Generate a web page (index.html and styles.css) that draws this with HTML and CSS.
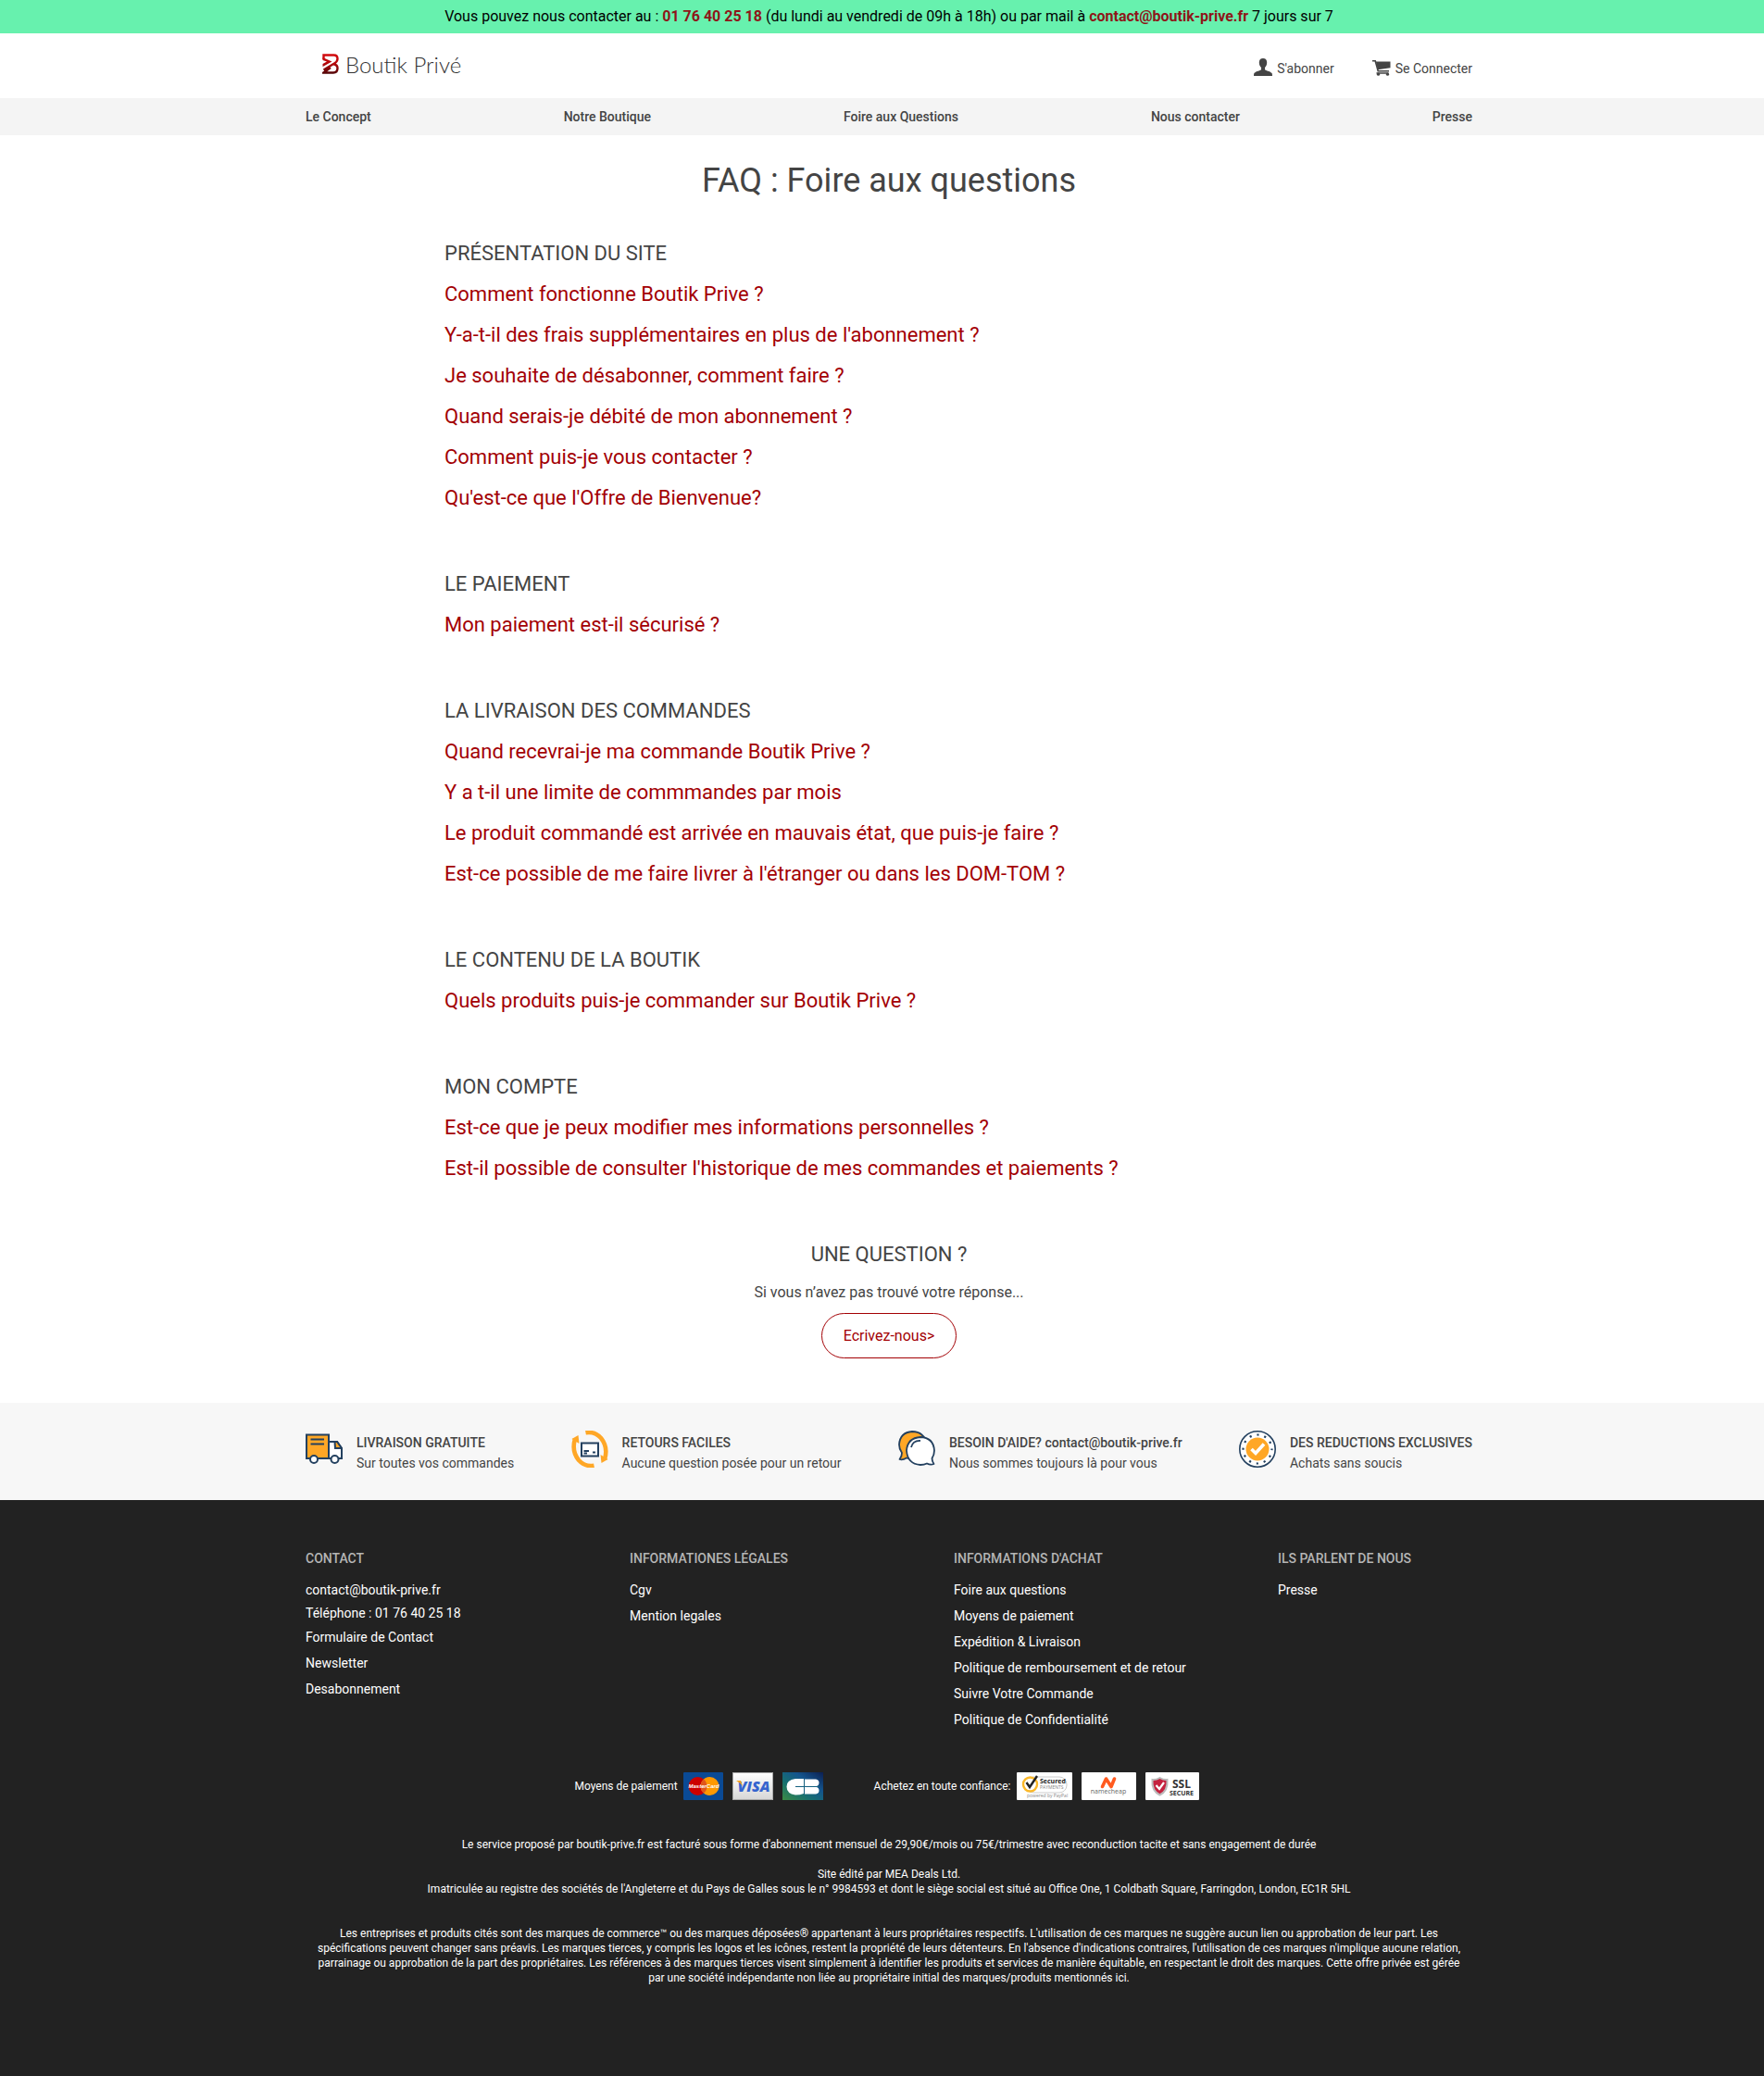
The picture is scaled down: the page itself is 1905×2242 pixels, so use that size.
FILE: index.html
```html
<!DOCTYPE html>
<html lang="fr">
<head>
<meta charset="utf-8">
<title>Boutik Privé - FAQ</title>
<meta name="viewport" content="width=device-width, initial-scale=1">
<link rel="stylesheet" href="styles.css">
</head>
<body>
<div class="topbar band">
  <p>Vous pouvez nous contacter au : <strong>01 76 40 25 18</strong> (du lundi au vendredi de 09h à 18h) ou par mail à <a href="mailto:contact@boutik-prive.fr">contact@boutik-prive.fr</a> 7 jours sur 7</p>
</div>

<header class="header band">
  <div class="container header-row">
    <a class="logo" href="#">
      <svg width="18" height="22" viewBox="0 0 18 22" aria-hidden="true">
        <defs><linearGradient id="lg" gradientUnits="userSpaceOnUse" x1="0" y1="0" x2="0" y2="22"><stop offset="0" stop-color="#d60a0e"/><stop offset=".5" stop-color="#b3080b"/><stop offset="1" stop-color="#4d0507"/></linearGradient></defs>
        <path d="M1.500 6V1.500H12.500Q16.500 1.500 16.500 5.500Q16.500 8.500 13 10.500L1.500 17.500M12.500 11.500Q16.500 12 16.500 15.500Q16.500 20.500 12 20.500H1.500L9 15" fill="none" stroke="url(#lg)" stroke-width="2.400"/>
        <path d="M.5 4L10.500 8.500L.5 14V11L5 8.600L.5 7Z" fill="url(#lg)"/>
      </svg>
      <span>Boutik Privé</span>
    </a>
    <div class="account">
      <a href="#">
        <svg width="20" height="19" viewBox="0 0 20 19" aria-hidden="true"><path d="M10 0C7.500 0 5.800 1.600 5.800 4.200C5.800 6.500 6.500 8.500 8 10V12.200C6 13.500 1 14.500 .3 16.300Q0 17.500 0 19H20Q20 17.500 19.700 16.300C19 14.500 14 13.500 12 12.200V10C13.500 8.500 14.200 6.500 14.200 4.200C14.200 1.600 12.500 0 10 0Z" fill="currentColor"/></svg>
        S'abonner
      </a>
      <a href="#">
        <svg width="20" height="17" viewBox="0 0 20 17" aria-hidden="true"><path d="M0 .8H3.200L6.200 11.800H18M4.500 14H17.500" fill="none" stroke="currentColor" stroke-width="1.600"/><path d="M3.800 1.500H19.500V8.200L6 10.200Z" fill="currentColor"/><circle cx="6.500" cy="15.200" r="1.600" fill="currentColor"/><circle cx="16.500" cy="15.200" r="1.600" fill="currentColor"/></svg>
        Se Connecter
      </a>
    </div>
  </div>
</header>

<nav class="nav band">
  <div class="container nav-row">
    <a href="#">Le Concept</a>
    <a href="#">Notre Boutique</a>
    <a href="#">Foire aux Questions</a>
    <a href="#">Nous contacter</a>
    <a href="#">Presse</a>
  </div>
</nav>

<main class="main band">
  <h1>FAQ : Foire aux questions</h1>
  <div class="faq">
    <section>
      <h2>PRÉSENTATION DU SITE</h2>
      <a href="#">Comment fonctionne Boutik Prive ?</a>
      <a href="#">Y-a-t-il des frais supplémentaires en plus de l'abonnement ?</a>
      <a href="#">Je souhaite de désabonner, comment faire ?</a>
      <a href="#">Quand serais-je débité de mon abonnement ?</a>
      <a href="#">Comment puis-je vous contacter ?</a>
      <a href="#">Qu'est-ce que l'Offre de Bienvenue?</a>
    </section>
    <section>
      <h2>LE PAIEMENT</h2>
      <a href="#">Mon paiement est-il sécurisé ?</a>
    </section>
    <section>
      <h2>LA LIVRAISON DES COMMANDES</h2>
      <a href="#">Quand recevrai-je ma commande Boutik Prive ?</a>
      <a href="#">Y a t-il une limite de commmandes par mois</a>
      <a href="#">Le produit commandé est arrivée en mauvais état, que puis-je faire ?</a>
      <a href="#">Est-ce possible de me faire livrer à l'étranger ou dans les DOM-TOM ?</a>
    </section>
    <section>
      <h2>LE CONTENU DE LA BOUTIK</h2>
      <a href="#">Quels produits puis-je commander sur Boutik Prive ?</a>
    </section>
    <section>
      <h2>MON COMPTE</h2>
      <a href="#">Est-ce que je peux modifier mes informations personnelles ?</a>
      <a href="#">Est-il possible de consulter l'historique de mes commandes et paiements ?</a>
    </section>
  </div>
  <section class="ask">
    <h2>UNE QUESTION ?</h2>
    <p>Si vous n’avez pas trouvé votre réponse...</p>
    <button type="button">Ecrivez-nous&gt;</button>
  </section>
</main>

<section class="features band">
  <div class="container features-row">
    <div class="feature">
      <svg width="40" height="40" viewBox="0 0 40 40" aria-hidden="true"><g stroke="#23405f" stroke-width="2"><path d="M1 4.500H25V30H1Z" fill="#ffa726"/><path d="M25 12H34L39 19V30H25Z" fill="#fff"/><path d="M31.500 12H34L39 19H32Z" fill="#ffa726"/><path d="M5.500 9.500H20M5.500 14.500H20" fill="none"/><circle cx="9" cy="31" r="4" fill="#fff"/><circle cx="31.500" cy="31" r="4" fill="#fff"/></g></svg>
      <p><strong>LIVRAISON GRATUITE</strong>Sur toutes vos commandes</p>
    </div>
    <div class="feature">
      <svg width="40" height="40" viewBox="0 0 40 40" aria-hidden="true"><path d="M15.500 2.300Q25 .5 32 8Q40 18 36 31M24.500 37.700Q15 39.500 8 32Q0 22 4 9" fill="none" stroke="#ffa726" stroke-width="4.600"/><path d="M31.500 26L39.500 31L32.500 35ZM8.500 14L.5 9L7.500 5Z" fill="#ffa726"/><path d="M11 13.500H29V27.500H11Z" fill="#fff" stroke="#23405f" stroke-width="2"/><path d="M13.500 22H19M13.500 24.500H17M23 23.500H26" stroke="#23405f" stroke-width="2"/></svg>
      <p><strong>RETOURS FACILES</strong>Aucune question posée pour un retour</p>
    </div>
    <div class="feature">
      <svg width="40" height="40" viewBox="0 0 40 40" aria-hidden="true"><g stroke="#23405f" stroke-width="1.800" stroke-linejoin="round"><path d="M4 24Q1 20 1 15Q2 2 15 1Q28 1 31 15Q30 27 17 30Q13 31 9 29.500Q5 32 1.500 31Q4 28 4 24Z" fill="#ffa726"/><path d="M36.500 30Q39 26 39 21.500Q38 7.500 24 7Q10 8 9 21.500Q10 36 24 37Q28 37 31 35.500Q35 37.500 38.500 36Q36.500 33 36.500 30Z" fill="#fff"/><path d="M14 18Q16 10.500 24 11" fill="none"/></g></svg>
      <p><strong>BESOIN D'AIDE? contact@boutik-prive.fr</strong>Nous sommes toujours là pour vous</p>
    </div>
    <div class="feature">
      <svg width="40" height="40" viewBox="0 0 40 40" aria-hidden="true"><circle cx="20" cy="20" r="19.200" fill="#fff" stroke="#23405f" stroke-width="1.600"/><circle cx="20" cy="20" r="15.500" fill="none" stroke="#23405f" stroke-width="2.200" stroke-dasharray="2.200 5.915" stroke-dashoffset="1.100"/><circle cx="20" cy="20" r="12.500" fill="#ffa726"/><path d="M13.500 20L18 24.500L27 14.500" fill="none" stroke="#fff" stroke-width="3.600"/></svg>
      <p><strong>DES REDUCTIONS EXCLUSIVES</strong>Achats sans soucis</p>
    </div>
  </div>
</section>

<footer class="footer band">
  <div class="container">
    <div class="columns">
      <section class="contact">
        <h3>CONTACT</h3>
        <a href="mailto:contact@boutik-prive.fr">contact@boutik-prive.fr</a>
        <p>Téléphone : 01 76 40 25 18</p>
        <a href="#">Formulaire de Contact</a>
        <a href="#">Newsletter</a>
        <a href="#">Desabonnement</a>
      </section>
      <section>
        <h3>INFORMATIONES LÉGALES</h3>
        <a href="#">Cgv</a>
        <a href="#">Mention legales</a>
      </section>
      <section>
        <h3>INFORMATIONS D'ACHAT</h3>
        <a href="#">Foire aux questions</a>
        <a href="#">Moyens de paiement</a>
        <a href="#">Expédition &amp; Livraison</a>
        <a href="#">Politique de remboursement et de retour</a>
        <a href="#">Suivre Votre Commande</a>
        <a href="#">Politique de Confidentialité</a>
      </section>
      <section>
        <h3>ILS PARLENT DE NOUS</h3>
        <a href="#">Presse</a>
      </section>
    </div>

    <div class="trust">
      <div class="badges">
        <span class="label">Moyens de paiement</span>
        <svg width="43" height="30" viewBox="0 0 43 30" role="img" aria-label="MasterCard"><rect width="43" height="30" rx="1" fill="#0a4a95"/><circle cx="15.500" cy="15" r="10" fill="#cc0000"/><circle cx="28.500" cy="15" r="10" fill="#ff9900"/><path d="M22 7.400A10 10 0 0 1 22 22.600A10 10 0 0 1 22 7.400Z" fill="#e0561a"/><text x="22" y="17" text-anchor="middle" class="mc">MasterCard</text></svg>
        <svg width="44" height="30" viewBox="0 0 44 30" role="img" aria-label="Visa"><defs><linearGradient id="vg" x1="0" y1="0" x2="0" y2="1"><stop offset="0" stop-color="#fff"/><stop offset="1" stop-color="#d6d6d6"/></linearGradient></defs><rect x=".5" y=".5" width="43" height="29" fill="url(#vg)" stroke="#a9a9a9"/><text x="23" y="21" text-anchor="middle" class="visa">VISA</text><path d="M4 9H9L11 15Q8 11 4 9Z" fill="#f5a21b"/></svg>
        <svg width="44" height="30" viewBox="0 0 44 30" role="img" aria-label="CB"><defs><linearGradient id="cg" x1="0" y1="1" x2="1" y2="0"><stop offset="0" stop-color="#3d8b43"/><stop offset=".35" stop-color="#17706f"/><stop offset=".65" stop-color="#14558d"/><stop offset="1" stop-color="#0c1e50"/></linearGradient></defs><rect width="44" height="30" fill="url(#cg)"/><path d="M23 7V23Q19 24.500 14 24.500Q4.500 23 4.500 15.500Q4.500 8 14 7ZM24 7.500H36Q39.500 8 39.500 11.300Q39.500 14.500 36 15.500Q39.500 16.500 39.500 19.800Q39.500 23 36 23.500H24Z" fill="#fff"/><path d="M14 15.500H40" stroke="#14607f" stroke-width="1"/><path d="M23.500 7V24" stroke="#14607f" stroke-width="1"/></svg>
      </div>
      <div class="badges">
        <span class="label">Achetez en toute confiance:</span>
        <svg width="60" height="30" viewBox="0 0 60 30" role="img" aria-label="Secured Payments powered by PayPal"><rect width="60" height="30" rx="1" fill="#fff"/><rect x="10" y="5" width="44" height="17" rx="8" fill="none" stroke="#ccc"/><circle cx="14.500" cy="13" r="7.500" fill="#fff" stroke="#fbb829" stroke-width="2.400"/><path d="M10.500 11L14 16L22 4" fill="none" stroke="#222" stroke-width="2.400"/><text x="25" y="12" class="sec">Secured</text><text x="25" y="18" class="pay">PAYMENTS</text><text x="11" y="27" class="pay">powered by PayPal</text></svg>
        <svg width="59" height="30" viewBox="0 0 59 30" role="img" aria-label="namecheap"><rect width="59" height="30" rx="1" fill="#fff"/><path d="M22.500 15.500L26.500 7L32 15.500L35.500 7" fill="none" stroke="#ff5a1f" stroke-width="3.600" stroke-linecap="round" stroke-linejoin="round"/><text x="29" y="23" text-anchor="middle" class="nc">namecheap</text></svg>
        <svg width="58" height="30" viewBox="0 0 58 30" role="img" aria-label="SSL Secure"><rect width="58" height="30" rx="1" fill="#fff"/><path d="M15.500 6Q11 8.500 7.500 8Q6.500 20 15.500 24.500Q24.500 20 23.500 8Q20 8.500 15.500 6Z" fill="#c5223f" stroke="#bbb" stroke-width="2"/><path d="M11.500 14L15 18L20 11" fill="none" stroke="#fff" stroke-width="2.200"/><text x="39" y="17" text-anchor="middle" class="ssl">SSL</text><text x="39" y="25" text-anchor="middle" class="ssl-s">SECURE</text></svg>
      </div>
    </div>

    <div class="legal">
      <p>Le service proposé par boutik-prive.fr est facturé sous forme d'abonnement mensuel de 29,90€/mois ou 75€/trimestre avec reconduction tacite et sans engagement de durée</p>
      <p>Site édité par MEA Deals Ltd.<br>Imatriculée au registre des sociétés de l'Angleterre et du Pays de Galles sous le n° 9984593 et dont le siège social est situé au Office One, 1 Coldbath Square, Farringdon, London, EC1R 5HL</p>
      <p class="marks">Les entreprises et produits cités sont des marques de commerce™ ou des marques déposées® appartenant à leurs propriétaires respectifs. L'utilisation de ces marques ne suggère aucun lien ou approbation de leur part. Les spécifications peuvent changer sans préavis. Les marques tierces, y compris les logos et les icônes, restent la propriété de leurs détenteurs. En l'absence d'indications contraires, l'utilisation de ces marques n'implique aucune relation, parrainage ou approbation de la part des propriétaires. Les références à des marques tierces visent simplement à identifier les produits et services de manière équitable, en respectant le droit des marques. Cette offre privée est gérée par une société indépendante non liée au propriétaire initial des marques/produits mentionnés ici.</p>
    </div>
  </div>
</footer>
</body>
</html>
```
FILE: styles.css
```css
* { box-sizing: border-box; }
body { margin: 0; background: #fff; color: #444; font: 14px/20px Roboto, sans-serif; }
h1, h2, h3, p { margin: 0; font-weight: 400; }
a { color: inherit; text-decoration: none; }
svg { display: block; flex: none; }

/* The content axis sits half a scrollbar right of the window centre */
.band { padding-left: 15px; }
.container { max-width: 1260px; margin: 0 auto; }

.topbar { background: #67f1ae; color: #000; text-align: center; font-size: 16px; line-height: 36px; }
.topbar strong, .topbar a { color: #8e1519; font-weight: 700; }

.header-row { display: flex; justify-content: space-between; height: 70px; }
.logo { display: flex; gap: 7px; padding: 22px 0 0 18px; color: #333; font: 300 24px/24px Lato, sans-serif; }
.account { display: flex; gap: 41px; padding-top: 26px; }
.account a { display: flex; align-items: flex-end; gap: 5px; height: 20px; line-height: 16px; }

.nav { background: #f4f4f4; }
.nav-row { display: flex; justify-content: space-between; line-height: 40px; font-weight: 500; }

h1 { padding-top: 25px; text-align: center; font-size: 36px; line-height: 48px; }
h2 { font-size: 22px; line-height: 44px; }
.faq { max-width: 960px; margin: 0 auto; padding-top: 33px; }
.faq section { margin-bottom: 49px; }
.faq a { display: block; width: fit-content; color: #a30004; font-size: 22px; line-height: 44px; }

.ask { display: flex; flex-direction: column; align-items: center; padding-bottom: 48px; font-size: 16px; }
.ask p { line-height: 38px; padding-bottom: 3px; }
.ask button { padding: 0 23px; height: 49px; border: 1px solid #a30004; border-radius: 25px; background: #fff; color: #a30004; font: inherit; cursor: pointer; }

.features { background: #f7f7f7; }
.features-row { display: flex; justify-content: space-between; padding: 30px 0 29px; }
.feature { display: flex; gap: 15px; line-height: 22px; }
.feature strong { display: block; font-weight: 500; }
.feature p { padding-top: 2px; }

.footer { background: #222; color: #fff; padding-top: 49px; padding-bottom: 98px; }
/* Four even tracks that run past the container, so the last one starts at its own text width */
.columns { display: grid; grid-template-columns: repeat(4, 1fr); margin-right: -140px; white-space: nowrap; }
.columns h3 { color: #b5b5b5; font-size: 14px; font-weight: 500; line-height: 28px; padding-bottom: 6px; }
.columns a { display: block; width: fit-content; line-height: 28px; }
.contact p { line-height: 23px; }

.trust { display: flex; justify-content: center; gap: 55px; padding: 43px 5px 0 0; font-size: 12px; }
.badges { display: flex; align-items: center; gap: 10px; }
.label { margin-right: -4px; }
.mc { font: italic 700 6px "Liberation Sans", sans-serif; fill: #fff; }
.visa { font: italic 900 16px "Open Sans", sans-serif; fill: #3564ce; }
.sec { font: 700 7px "Open Sans", sans-serif; fill: #222; }
.pay { font: 5px "Open Sans", sans-serif; fill: #888; }
.nc { font: 7px "Open Sans", sans-serif; fill: #666; }
.ssl { font: 700 12px "Open Sans", sans-serif; fill: #333; }
.ssl-s { font: 700 7px "Open Sans", sans-serif; fill: #333; }

.legal { padding-top: 40px; text-align: center; font-size: 12px; line-height: 16px; }
.legal p { padding-bottom: 16px; }
.legal .marks { padding: 16px 6px 0; }
```
